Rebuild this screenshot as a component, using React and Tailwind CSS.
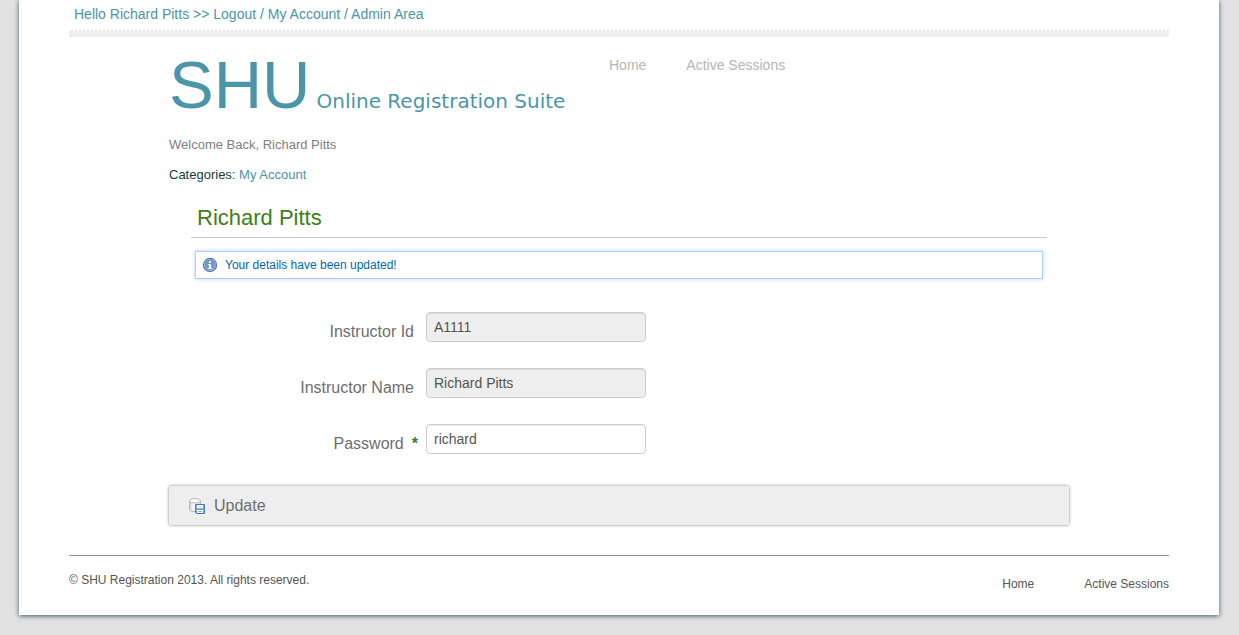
const links = ['Home', 'Active Sessions'];

function InfoIcon() {
  return (
    <svg className="size-4 shrink-0" viewBox="0 0 16 16" aria-hidden="true">
      <defs>
        <linearGradient id="info" x1="0" y1="0" x2="0" y2="1">
          <stop offset="0" stopColor="#5f8fca" />
          <stop offset="1" stopColor="#7ba6d8" />
        </linearGradient>
      </defs>
      <circle cx="8" cy="8" r="7.2" fill="#5b6f9c" />
      <circle cx="8" cy="8" r="6.2" fill="#92b2da" />
      <circle cx="8" cy="8" r="5.3" fill="url(#info)" />
      <path d="M7 4h2v2H7zM6 7h3v4h1v1H6v-1h1V8H6z" fill="#fff" />
    </svg>
  );
}

function SaveIcon() {
  return (
    <svg className="size-4 shrink-0" viewBox="0 0 16 16" aria-hidden="true">
      <defs>
        <linearGradient id="disk" x1="0" y1="0" x2="1" y2="0">
          <stop offset="0" stopColor="#d2d2d2" />
          <stop offset="0.4" stopColor="#fafafa" />
          <stop offset="1" stopColor="#d8d8d8" />
        </linearGradient>
      </defs>
      <path d="M.5 3v8.500C.5 12.800 3 13.500 6 13.500s5.500-.7 5.500-2V3z" fill="url(#disk)" stroke="#b4b4b4" />
      <ellipse cx="6" cy="2.800" rx="5.500" ry="2.300" fill="#f6f6f6" stroke="#bdbdbd" />
      <path d="M6.500 6.500h9v9h-8l-1-1z" fill="#79a6ea" stroke="#4576cc" />
      <path d="M8 7h6v3H8z" fill="#fff" />
      <path d="M9 8h4v1H9z" fill="#d5e0f0" />
      <path d="M8 12h6v3H8z" fill="#eef6dd" />
      <path d="M9 13h4v1H9z" fill="#94cc50" />
    </svg>
  );
}

function Field({ id, label, required, ...props }) {
  return (
    <div className="flex h-[30px] items-start">
      <label htmlFor={id} className="flex w-[257px] shrink-0 items-center justify-end pt-2 pr-3 text-base leading-6 text-[#6e6e6e]">
        {label}
        {required && <span className="-mr-1 ml-2 font-bold text-[#3c8018]">*</span>}
      </label>
      <input
        id={id}
        type="text"
        className="h-[30px] w-[220px] rounded border border-[#ccc] bg-white px-[7px] text-sm text-[#555] shadow-[inset_0_1px_1px_rgba(0,0,0,0.08)] read-only:bg-[#eee]"
        {...props}
      />
    </div>
  );
}

export default function App() {
  return (
    <div className="bg-[#e2e2e2] pb-5 pl-[19px] pr-5 font-['Liberation_Sans',Arial,sans-serif] text-[#666]">
      <div className="bg-white px-[50px] pb-[21px] shadow-[0_1px_5px_#3d5a66]">
        <header>
          <p className="h-[30px] pl-[5px] pt-1 text-sm leading-5 text-[#4a96a8]">
            Hello Richard Pitts &gt;&gt; <a href="#logout">Logout</a> / <a href="#account">My Account</a> / <a href="#admin">Admin Area</a>
          </p>
          <div className="h-[7px] bg-[linear-gradient(135deg,#f5f5f5_40%,#dedede_40%_60%,#f5f5f5_60%)] bg-[length:4px_4px]" />
        </header>
        <div className="mx-auto max-w-[900px]">
          <div className="flex h-[92px] items-start pt-[15px]">
            <a href="#home" className="flex w-[440px] shrink-0 items-baseline gap-1.5 whitespace-nowrap text-[#4a96a8]">
              <span className="text-[67px] leading-[66px]">SHU</span>
              <span className="font-['DejaVu_Sans',sans-serif] text-xl leading-6">Online Registration Suite</span>
            </a>
            <nav className="flex gap-10 pt-[3px] text-sm leading-5 text-[#b5b5b5]">
              {links.map((l) => <a key={l} href="#nav">{l}</a>)}
            </nav>
          </div>
          <p className="mt-1.5 text-[13px] leading-5 text-[#808080]">Welcome Back, Richard Pitts</p>
          <p className="mt-2.5 text-[13px] leading-5 text-[#163b42]">
            Categories: <a href="#account" className="text-[#4a96a8]">My Account</a>
          </p>
          <form>
            <div className="mx-[22px]">
              <h1 className="border-b border-[#ccc] px-1.5 pb-1 pt-[18px] text-[22px] leading-[30px] text-[#3c8018]">Richard Pitts</h1>
              <div role="status" className="mx-1 mt-[13px] flex h-7 items-center gap-[7px] border border-[#b0ccff] px-1.5 text-xs text-[#0068b0] shadow-[0_0_4px_#b8d4ff]">
                <InfoIcon />
                <span>Your details have been updated!</span>
              </div>
            </div>
            <div className="mt-[33px] flex flex-col gap-[26px]">
              <Field id="iid" label="Instructor Id" defaultValue="A1111" readOnly />
              <Field id="iname" label="Instructor Name" defaultValue="Richard Pitts" readOnly />
              <Field id="pass" label="Password" defaultValue="richard" required />
            </div>
            <button type="button" className="mt-8 flex h-[39px] w-full items-center gap-[9px] bg-[#eee] px-5 text-base text-[#6e6e6e] shadow-[0_0_3px_#888]">
              <SaveIcon />
              Update
            </button>
          </form>
        </div>
        <footer className="mt-[30px] flex justify-between border-t border-[#8b9696] pt-3.5 text-xs leading-5 text-[#555]">
          <p>© SHU Registration 2013. All rights reserved.</p>
          <nav className="flex gap-[50px] pt-1">
            {links.map((l) => <a key={l} href="#nav">{l}</a>)}
          </nav>
        </footer>
      </div>
    </div>
  );
}
